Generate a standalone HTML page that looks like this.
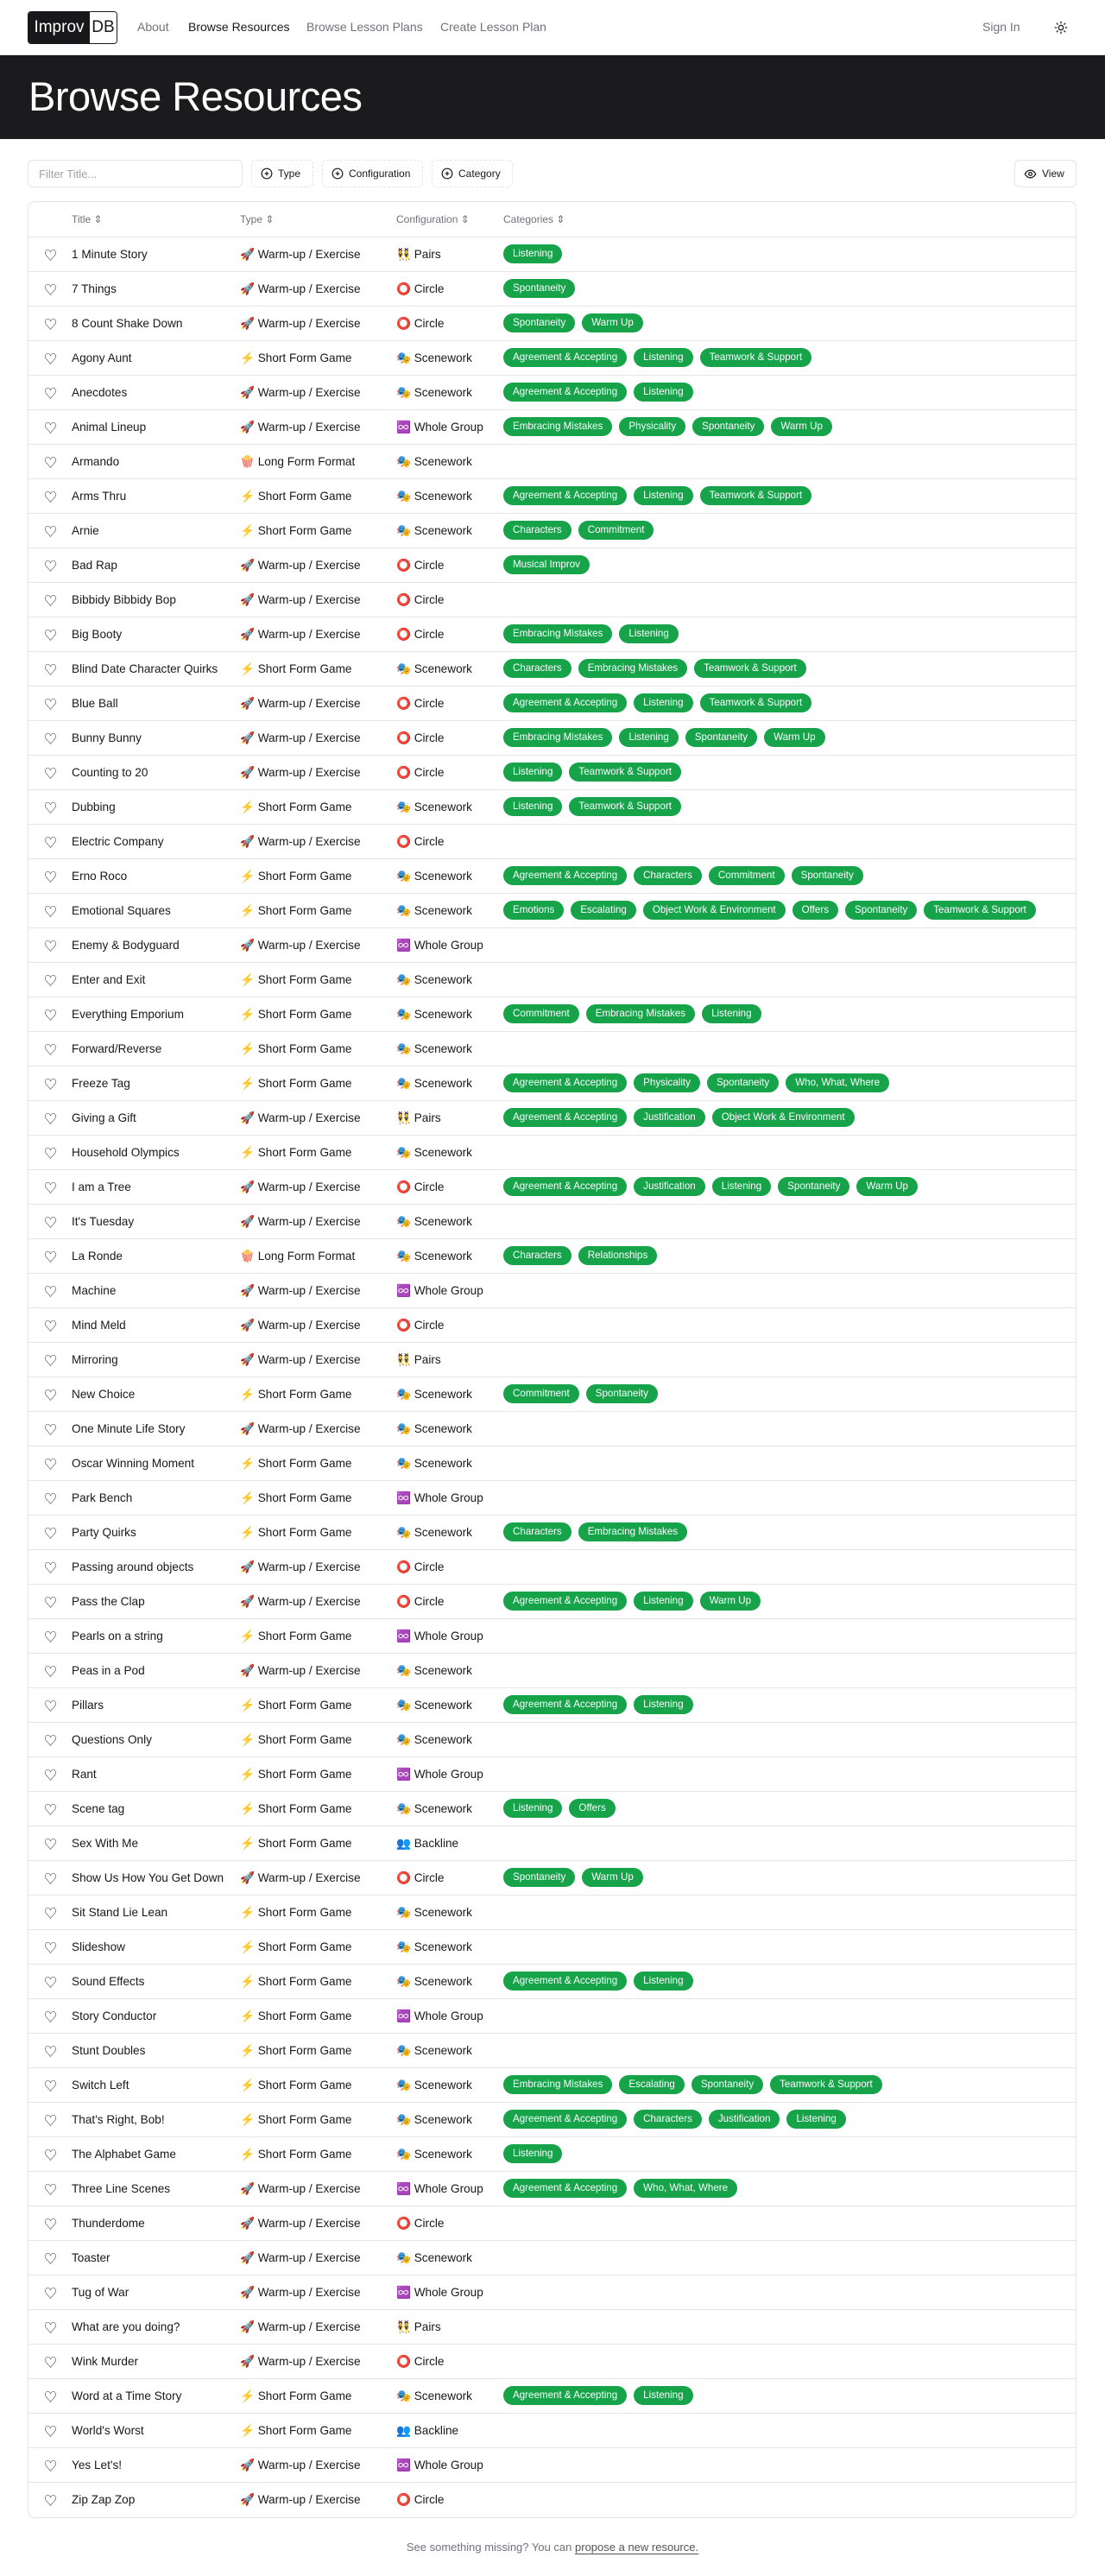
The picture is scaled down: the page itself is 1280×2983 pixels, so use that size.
<!DOCTYPE html>
<html><head><meta charset="utf-8">
<style>
*{box-sizing:border-box;margin:0;padding:0}
body{width:1280px;height:2983px;background:#fff;font-family:"Liberation Sans","Noto Sans CJK SC",sans-serif;color:#18181b;position:relative}
.nav{height:64px;border-bottom:1px solid #e4e4e7;position:relative}
.logo{position:absolute;left:32px;top:13px;height:38px;display:flex;border:1px solid #18181b;border-radius:4px;overflow:hidden;font-size:19px}
.logo .a{background:#18181b;color:#fff;width:71px;display:flex;align-items:center;justify-content:center}
.logo .b{background:#fff;color:#18181b;width:31px;display:flex;align-items:center;justify-content:center}
.nl{position:absolute;top:23px;font-size:14px;color:#71717a}
.banner{background:#1b1b1d;height:97px;position:relative}
.banner h1{position:absolute;left:33px;top:20px;font-size:47px;font-weight:400;color:#fff;letter-spacing:-0.5px}
.fb{position:absolute;top:185px;height:32px;border-radius:6px;font-size:12px;display:flex;align-items:center}
.inp{left:32px;width:249px;border:1px solid #e4e4e7;padding-left:12px;color:#a1a1aa;font-size:13px}
.dash{border:1px dashed #e4e4e7;padding-left:10px;color:#18181b}
.dash svg,.vw svg{margin-right:6px}
.vw{left:1175px;width:72px;border:1px solid #e4e4e7;padding-left:10px}
.tbl{position:absolute;left:32px;top:233px;width:1215px;border:1px solid #e4e4e7;border-radius:8px;overflow:hidden}
.hr{height:41px;position:relative;font-size:12px;color:#71717a;border-bottom:1px solid #e4e4e7}
.hr span{position:absolute;top:13px}
.r{height:40px;position:relative;border-bottom:1px solid #e4e4e7;font-size:13.6px}
.r:last-child{border-bottom:none}
.r>*{position:absolute;top:12px;white-space:nowrap}
.h{left:18px;top:10px!important;font-size:15px;color:#3f3f46}
.t{left:50px}.y{left:245px}.c{left:426px}
.g{left:550px;top:8px!important;display:flex;gap:8px}
.g i{font-style:normal;background:#16a34a;color:#fff;font-size:11.6px;height:22px;line-height:22px;padding:0 11px;border-radius:11px}
.foot{position:absolute;top:2942px;width:100%;text-align:center;font-size:13px;color:#71717a}
.foot u{color:#52525b;text-underline-offset:3px}
</style></head><body>
<div class="nav">
<div class="logo"><div class="a">Improv</div><div class="b">DB</div></div>
<span class="nl" style="left:159px">About</span>
<span class="nl" style="left:218px;color:#18181b">Browse Resources</span>
<span class="nl" style="left:355px">Browse Lesson Plans</span>
<span class="nl" style="left:510px">Create Lesson Plan</span>
<span class="nl" style="left:1138px">Sign In</span>
<svg style="position:absolute;left:1221px;top:24px" width="16" height="16" viewBox="0 0 24 24" fill="none" stroke="#18181b" stroke-width="2" stroke-linecap="round"><circle cx="12" cy="12" r="4"/><path d="M12 2v2M12 20v2M4.9 4.9l1.4 1.4M17.7 17.7l1.4 1.4M2 12h2M20 12h2M6.3 17.7l-1.4 1.4M19.1 4.9l-1.4 1.4"/></svg>
</div>
<div class="banner"><h1>Browse Resources</h1></div>
<div class="fb inp">Filter Title...</div>
<div class="fb dash" style="left:291px;width:72px"><svg width="14" height="14" viewBox="0 0 24 24" fill="none" stroke="#18181b" stroke-width="2"><circle cx="12" cy="12" r="10"/><path d="M8 12h8M12 8v8"/></svg>Type</div>
<div class="fb dash" style="left:373px;width:117px"><svg width="14" height="14" viewBox="0 0 24 24" fill="none" stroke="#18181b" stroke-width="2"><circle cx="12" cy="12" r="10"/><path d="M8 12h8M12 8v8"/></svg>Configuration</div>
<div class="fb dash" style="left:500px;width:94px"><svg width="14" height="14" viewBox="0 0 24 24" fill="none" stroke="#18181b" stroke-width="2"><circle cx="12" cy="12" r="10"/><path d="M8 12h8M12 8v8"/></svg>Category</div>
<div class="fb vw"><svg width="15" height="15" viewBox="0 0 24 24" fill="none" stroke="#18181b" stroke-width="2"><path d="M2 12s3.5-7 10-7 10 7 10 7-3.5 7-10 7S2 12 2 12z"/><circle cx="12" cy="12" r="3"/></svg>View</div>
<div class="tbl">
<div class="hr"><span style="left:50px">Title ⇕</span><span style="left:245px">Type ⇕</span><span style="left:426px">Configuration ⇕</span><span style="left:550px">Categories ⇕</span></div>
<div class="r"><span class="h">♡</span><span class="t">1 Minute Story</span><span class="y">🚀 Warm-up / Exercise</span><span class="c">👯 Pairs</span><span class="g"><i>Listening</i></span></div>
<div class="r"><span class="h">♡</span><span class="t">7 Things</span><span class="y">🚀 Warm-up / Exercise</span><span class="c">⭕ Circle</span><span class="g"><i>Spontaneity</i></span></div>
<div class="r"><span class="h">♡</span><span class="t">8 Count Shake Down</span><span class="y">🚀 Warm-up / Exercise</span><span class="c">⭕ Circle</span><span class="g"><i>Spontaneity</i><i>Warm Up</i></span></div>
<div class="r"><span class="h">♡</span><span class="t">Agony Aunt</span><span class="y">⚡ Short Form Game</span><span class="c">🎭 Scenework</span><span class="g"><i>Agreement &amp; Accepting</i><i>Listening</i><i>Teamwork &amp; Support</i></span></div>
<div class="r"><span class="h">♡</span><span class="t">Anecdotes</span><span class="y">🚀 Warm-up / Exercise</span><span class="c">🎭 Scenework</span><span class="g"><i>Agreement &amp; Accepting</i><i>Listening</i></span></div>
<div class="r"><span class="h">♡</span><span class="t">Animal Lineup</span><span class="y">🚀 Warm-up / Exercise</span><span class="c">♾️ Whole Group</span><span class="g"><i>Embracing Mistakes</i><i>Physicality</i><i>Spontaneity</i><i>Warm Up</i></span></div>
<div class="r"><span class="h">♡</span><span class="t">Armando</span><span class="y">🍿 Long Form Format</span><span class="c">🎭 Scenework</span></div>
<div class="r"><span class="h">♡</span><span class="t">Arms Thru</span><span class="y">⚡ Short Form Game</span><span class="c">🎭 Scenework</span><span class="g"><i>Agreement &amp; Accepting</i><i>Listening</i><i>Teamwork &amp; Support</i></span></div>
<div class="r"><span class="h">♡</span><span class="t">Arnie</span><span class="y">⚡ Short Form Game</span><span class="c">🎭 Scenework</span><span class="g"><i>Characters</i><i>Commitment</i></span></div>
<div class="r"><span class="h">♡</span><span class="t">Bad Rap</span><span class="y">🚀 Warm-up / Exercise</span><span class="c">⭕ Circle</span><span class="g"><i>Musical Improv</i></span></div>
<div class="r"><span class="h">♡</span><span class="t">Bibbidy Bibbidy Bop</span><span class="y">🚀 Warm-up / Exercise</span><span class="c">⭕ Circle</span></div>
<div class="r"><span class="h">♡</span><span class="t">Big Booty</span><span class="y">🚀 Warm-up / Exercise</span><span class="c">⭕ Circle</span><span class="g"><i>Embracing Mistakes</i><i>Listening</i></span></div>
<div class="r"><span class="h">♡</span><span class="t">Blind Date Character Quirks</span><span class="y">⚡ Short Form Game</span><span class="c">🎭 Scenework</span><span class="g"><i>Characters</i><i>Embracing Mistakes</i><i>Teamwork &amp; Support</i></span></div>
<div class="r"><span class="h">♡</span><span class="t">Blue Ball</span><span class="y">🚀 Warm-up / Exercise</span><span class="c">⭕ Circle</span><span class="g"><i>Agreement &amp; Accepting</i><i>Listening</i><i>Teamwork &amp; Support</i></span></div>
<div class="r"><span class="h">♡</span><span class="t">Bunny Bunny</span><span class="y">🚀 Warm-up / Exercise</span><span class="c">⭕ Circle</span><span class="g"><i>Embracing Mistakes</i><i>Listening</i><i>Spontaneity</i><i>Warm Up</i></span></div>
<div class="r"><span class="h">♡</span><span class="t">Counting to 20</span><span class="y">🚀 Warm-up / Exercise</span><span class="c">⭕ Circle</span><span class="g"><i>Listening</i><i>Teamwork &amp; Support</i></span></div>
<div class="r"><span class="h">♡</span><span class="t">Dubbing</span><span class="y">⚡ Short Form Game</span><span class="c">🎭 Scenework</span><span class="g"><i>Listening</i><i>Teamwork &amp; Support</i></span></div>
<div class="r"><span class="h">♡</span><span class="t">Electric Company</span><span class="y">🚀 Warm-up / Exercise</span><span class="c">⭕ Circle</span></div>
<div class="r"><span class="h">♡</span><span class="t">Erno Roco</span><span class="y">⚡ Short Form Game</span><span class="c">🎭 Scenework</span><span class="g"><i>Agreement &amp; Accepting</i><i>Characters</i><i>Commitment</i><i>Spontaneity</i></span></div>
<div class="r"><span class="h">♡</span><span class="t">Emotional Squares</span><span class="y">⚡ Short Form Game</span><span class="c">🎭 Scenework</span><span class="g"><i>Emotions</i><i>Escalating</i><i>Object Work &amp; Environment</i><i>Offers</i><i>Spontaneity</i><i>Teamwork &amp; Support</i></span></div>
<div class="r"><span class="h">♡</span><span class="t">Enemy &amp; Bodyguard</span><span class="y">🚀 Warm-up / Exercise</span><span class="c">♾️ Whole Group</span></div>
<div class="r"><span class="h">♡</span><span class="t">Enter and Exit</span><span class="y">⚡ Short Form Game</span><span class="c">🎭 Scenework</span></div>
<div class="r"><span class="h">♡</span><span class="t">Everything Emporium</span><span class="y">⚡ Short Form Game</span><span class="c">🎭 Scenework</span><span class="g"><i>Commitment</i><i>Embracing Mistakes</i><i>Listening</i></span></div>
<div class="r"><span class="h">♡</span><span class="t">Forward/Reverse</span><span class="y">⚡ Short Form Game</span><span class="c">🎭 Scenework</span></div>
<div class="r"><span class="h">♡</span><span class="t">Freeze Tag</span><span class="y">⚡ Short Form Game</span><span class="c">🎭 Scenework</span><span class="g"><i>Agreement &amp; Accepting</i><i>Physicality</i><i>Spontaneity</i><i>Who, What, Where</i></span></div>
<div class="r"><span class="h">♡</span><span class="t">Giving a Gift</span><span class="y">🚀 Warm-up / Exercise</span><span class="c">👯 Pairs</span><span class="g"><i>Agreement &amp; Accepting</i><i>Justification</i><i>Object Work &amp; Environment</i></span></div>
<div class="r"><span class="h">♡</span><span class="t">Household Olympics</span><span class="y">⚡ Short Form Game</span><span class="c">🎭 Scenework</span></div>
<div class="r"><span class="h">♡</span><span class="t">I am a Tree</span><span class="y">🚀 Warm-up / Exercise</span><span class="c">⭕ Circle</span><span class="g"><i>Agreement &amp; Accepting</i><i>Justification</i><i>Listening</i><i>Spontaneity</i><i>Warm Up</i></span></div>
<div class="r"><span class="h">♡</span><span class="t">It's Tuesday</span><span class="y">🚀 Warm-up / Exercise</span><span class="c">🎭 Scenework</span></div>
<div class="r"><span class="h">♡</span><span class="t">La Ronde</span><span class="y">🍿 Long Form Format</span><span class="c">🎭 Scenework</span><span class="g"><i>Characters</i><i>Relationships</i></span></div>
<div class="r"><span class="h">♡</span><span class="t">Machine</span><span class="y">🚀 Warm-up / Exercise</span><span class="c">♾️ Whole Group</span></div>
<div class="r"><span class="h">♡</span><span class="t">Mind Meld</span><span class="y">🚀 Warm-up / Exercise</span><span class="c">⭕ Circle</span></div>
<div class="r"><span class="h">♡</span><span class="t">Mirroring</span><span class="y">🚀 Warm-up / Exercise</span><span class="c">👯 Pairs</span></div>
<div class="r"><span class="h">♡</span><span class="t">New Choice</span><span class="y">⚡ Short Form Game</span><span class="c">🎭 Scenework</span><span class="g"><i>Commitment</i><i>Spontaneity</i></span></div>
<div class="r"><span class="h">♡</span><span class="t">One Minute Life Story</span><span class="y">🚀 Warm-up / Exercise</span><span class="c">🎭 Scenework</span></div>
<div class="r"><span class="h">♡</span><span class="t">Oscar Winning Moment</span><span class="y">⚡ Short Form Game</span><span class="c">🎭 Scenework</span></div>
<div class="r"><span class="h">♡</span><span class="t">Park Bench</span><span class="y">⚡ Short Form Game</span><span class="c">♾️ Whole Group</span></div>
<div class="r"><span class="h">♡</span><span class="t">Party Quirks</span><span class="y">⚡ Short Form Game</span><span class="c">🎭 Scenework</span><span class="g"><i>Characters</i><i>Embracing Mistakes</i></span></div>
<div class="r"><span class="h">♡</span><span class="t">Passing around objects</span><span class="y">🚀 Warm-up / Exercise</span><span class="c">⭕ Circle</span></div>
<div class="r"><span class="h">♡</span><span class="t">Pass the Clap</span><span class="y">🚀 Warm-up / Exercise</span><span class="c">⭕ Circle</span><span class="g"><i>Agreement &amp; Accepting</i><i>Listening</i><i>Warm Up</i></span></div>
<div class="r"><span class="h">♡</span><span class="t">Pearls on a string</span><span class="y">⚡ Short Form Game</span><span class="c">♾️ Whole Group</span></div>
<div class="r"><span class="h">♡</span><span class="t">Peas in a Pod</span><span class="y">🚀 Warm-up / Exercise</span><span class="c">🎭 Scenework</span></div>
<div class="r"><span class="h">♡</span><span class="t">Pillars</span><span class="y">⚡ Short Form Game</span><span class="c">🎭 Scenework</span><span class="g"><i>Agreement &amp; Accepting</i><i>Listening</i></span></div>
<div class="r"><span class="h">♡</span><span class="t">Questions Only</span><span class="y">⚡ Short Form Game</span><span class="c">🎭 Scenework</span></div>
<div class="r"><span class="h">♡</span><span class="t">Rant</span><span class="y">⚡ Short Form Game</span><span class="c">♾️ Whole Group</span></div>
<div class="r"><span class="h">♡</span><span class="t">Scene tag</span><span class="y">⚡ Short Form Game</span><span class="c">🎭 Scenework</span><span class="g"><i>Listening</i><i>Offers</i></span></div>
<div class="r"><span class="h">♡</span><span class="t">Sex With Me</span><span class="y">⚡ Short Form Game</span><span class="c">👥 Backline</span></div>
<div class="r"><span class="h">♡</span><span class="t">Show Us How You Get Down</span><span class="y">🚀 Warm-up / Exercise</span><span class="c">⭕ Circle</span><span class="g"><i>Spontaneity</i><i>Warm Up</i></span></div>
<div class="r"><span class="h">♡</span><span class="t">Sit Stand Lie Lean</span><span class="y">⚡ Short Form Game</span><span class="c">🎭 Scenework</span></div>
<div class="r"><span class="h">♡</span><span class="t">Slideshow</span><span class="y">⚡ Short Form Game</span><span class="c">🎭 Scenework</span></div>
<div class="r"><span class="h">♡</span><span class="t">Sound Effects</span><span class="y">⚡ Short Form Game</span><span class="c">🎭 Scenework</span><span class="g"><i>Agreement &amp; Accepting</i><i>Listening</i></span></div>
<div class="r"><span class="h">♡</span><span class="t">Story Conductor</span><span class="y">⚡ Short Form Game</span><span class="c">♾️ Whole Group</span></div>
<div class="r"><span class="h">♡</span><span class="t">Stunt Doubles</span><span class="y">⚡ Short Form Game</span><span class="c">🎭 Scenework</span></div>
<div class="r"><span class="h">♡</span><span class="t">Switch Left</span><span class="y">⚡ Short Form Game</span><span class="c">🎭 Scenework</span><span class="g"><i>Embracing Mistakes</i><i>Escalating</i><i>Spontaneity</i><i>Teamwork &amp; Support</i></span></div>
<div class="r"><span class="h">♡</span><span class="t">That's Right, Bob!</span><span class="y">⚡ Short Form Game</span><span class="c">🎭 Scenework</span><span class="g"><i>Agreement &amp; Accepting</i><i>Characters</i><i>Justification</i><i>Listening</i></span></div>
<div class="r"><span class="h">♡</span><span class="t">The Alphabet Game</span><span class="y">⚡ Short Form Game</span><span class="c">🎭 Scenework</span><span class="g"><i>Listening</i></span></div>
<div class="r"><span class="h">♡</span><span class="t">Three Line Scenes</span><span class="y">🚀 Warm-up / Exercise</span><span class="c">♾️ Whole Group</span><span class="g"><i>Agreement &amp; Accepting</i><i>Who, What, Where</i></span></div>
<div class="r"><span class="h">♡</span><span class="t">Thunderdome</span><span class="y">🚀 Warm-up / Exercise</span><span class="c">⭕ Circle</span></div>
<div class="r"><span class="h">♡</span><span class="t">Toaster</span><span class="y">🚀 Warm-up / Exercise</span><span class="c">🎭 Scenework</span></div>
<div class="r"><span class="h">♡</span><span class="t">Tug of War</span><span class="y">🚀 Warm-up / Exercise</span><span class="c">♾️ Whole Group</span></div>
<div class="r"><span class="h">♡</span><span class="t">What are you doing?</span><span class="y">🚀 Warm-up / Exercise</span><span class="c">👯 Pairs</span></div>
<div class="r"><span class="h">♡</span><span class="t">Wink Murder</span><span class="y">🚀 Warm-up / Exercise</span><span class="c">⭕ Circle</span></div>
<div class="r"><span class="h">♡</span><span class="t">Word at a Time Story</span><span class="y">⚡ Short Form Game</span><span class="c">🎭 Scenework</span><span class="g"><i>Agreement &amp; Accepting</i><i>Listening</i></span></div>
<div class="r"><span class="h">♡</span><span class="t">World's Worst</span><span class="y">⚡ Short Form Game</span><span class="c">👥 Backline</span></div>
<div class="r"><span class="h">♡</span><span class="t">Yes Let's!</span><span class="y">🚀 Warm-up / Exercise</span><span class="c">♾️ Whole Group</span></div>
<div class="r"><span class="h">♡</span><span class="t">Zip Zap Zop</span><span class="y">🚀 Warm-up / Exercise</span><span class="c">⭕ Circle</span></div>
</div>
<div class="foot">See something missing? You can <u>propose a new resource.</u></div>
</body></html>
